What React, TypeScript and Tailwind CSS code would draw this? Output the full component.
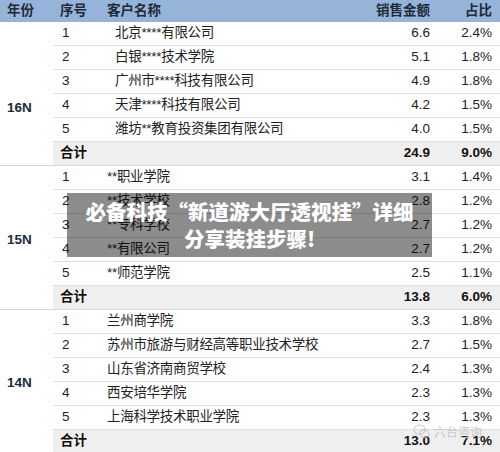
import React from "react";

type Row = { n: string; name: string; amt: string; pct: string };
type Group = { year: string; rows: Row[]; total: [string, string]; indent: boolean; pt: string };

const groups: Group[] = [
  {
    year: "16N",
    indent: true,
    pt: "pt-[30px]",
    rows: [
      { n: "1", name: "北京****有限公司", amt: "6.6", pct: "2.4%" },
      { n: "2", name: "白银****技术学院", amt: "5.1", pct: "1.8%" },
      { n: "3", name: "广州市****科技有限公司", amt: "4.9", pct: "1.8%" },
      { n: "4", name: "天津****科技有限公司", amt: "4.2", pct: "1.5%" },
      { n: "5", name: "潍坊**教育投资集团有限公司", amt: "4.0", pct: "1.5%" },
    ],
    total: ["24.9", "9.0%"],
  },
  {
    year: "15N",
    indent: false,
    pt: "pt-[6px]",
    rows: [
      { n: "1", name: "**职业学院", amt: "3.1", pct: "1.4%" },
      { n: "2", name: "**技术学校", amt: "2.8", pct: "1.2%" },
      { n: "3", name: "**专科学校", amt: "2.7", pct: "1.2%" },
      { n: "4", name: "**有限公司", amt: "2.7", pct: "1.2%" },
      { n: "5", name: "**师范学院", amt: "2.5", pct: "1.1%" },
    ],
    total: ["13.8", "6.0%"],
  },
  {
    year: "14N",
    indent: false,
    pt: "pt-[4px]",
    rows: [
      { n: "1", name: "兰州商学院", amt: "3.3", pct: "1.8%" },
      { n: "2", name: "苏州市旅游与财经高等职业技术学校", amt: "2.7", pct: "1.5%" },
      { n: "3", name: "山东省济南商贸学校", amt: "2.4", pct: "1.3%" },
      { n: "4", name: "西安培华学院", amt: "2.3", pct: "1.3%" },
      { n: "5", name: "上海科学技术职业学院", amt: "2.3", pct: "1.3%" },
    ],
    total: ["13.0", "7.1%"],
  },
];

const font = { fontFamily: '"Liberation Sans", "Noto Sans CJK SC", sans-serif' };

export default function App() {
  return (
    <div
      className="relative w-[500px] h-[452px] overflow-hidden bg-white text-[13.5px] text-[#222]"
      style={font}
    >
      {/* header */}
      <div className="grid grid-cols-[53px_54px_1fr_80px_70px] h-[22px] items-center bg-[#96b4d9] font-bold text-[#1e2a3a]">
        <div className="pl-[7px]">年份</div>
        <div className="pl-[7px]">序号</div>
        <div>客户名称</div>
        <div className="text-right">销售金额</div>
        <div className="text-right pr-[8px]">占比</div>
      </div>

      {groups.map((g) => (
        <div key={g.year} className="flex border-b border-[#d8d8d8]">
          <div className={`w-[53px] shrink-0 flex items-center pl-[7px] font-bold text-[#1e2a3a] ${g.pt}`}>
            {g.year}
          </div>
          <div className="flex-1 flex flex-col">
            {g.rows.map((r) => (
              <div
                key={r.n}
                className="grid grid-cols-[54px_1fr_80px_70px] h-[24px] items-center border-b border-[#e0e0e0]"
              >
                <div className="pl-[9px]">{r.n}</div>
                <div className={`whitespace-nowrap tracking-[-0.3px] ${g.indent ? "pl-[8px]" : ""}`}>{r.name}</div>
                <div className="text-right">{r.amt}</div>
                <div className="text-right pr-[8px]">{r.pct}</div>
              </div>
            ))}
            <div className="grid grid-cols-[54px_1fr_80px_70px] h-[23px] items-center bg-[#efefef] font-bold text-[#111]">
              <div className="pl-[7px]">合计</div>
              <div></div>
              <div className="text-right">{g.total[0]}</div>
              <div className="text-right pr-[8px]">{g.total[1]}</div>
            </div>
          </div>
        </div>
      ))}

      {/* overlay banner */}
      <div
        className="absolute left-[67px] top-[193px] w-[365px] h-[64px] bg-[rgba(0,0,0,0.45)] flex flex-col items-center justify-center text-white font-black text-[20.5px] leading-[27px] whitespace-nowrap"
        style={{ fontFamily: '"Noto Sans CJK SC", sans-serif' }}
      >
        <div>必备科技“新道游大厅透视挂”详细</div>
        <div>分享装挂步骤!</div>
      </div>

      {/* watermark */}
      <div
        className="absolute left-[413px] top-[424px] flex items-center gap-[4px] text-[12px] leading-[14px] text-[#c8c8c8] whitespace-nowrap"
        style={{ fontFamily: '"Noto Sans CJK SC", sans-serif' }}
      >
        <svg width="17" height="15" viewBox="0 0 18 16" fill="none" stroke="#c8c8c8" strokeWidth="1.2">
          <ellipse cx="7" cy="6" rx="6" ry="5" />
          <ellipse cx="12" cy="10" rx="5" ry="4" />
        </svg>
        <span>六台咨询</span>
      </div>
    </div>
  );
}
